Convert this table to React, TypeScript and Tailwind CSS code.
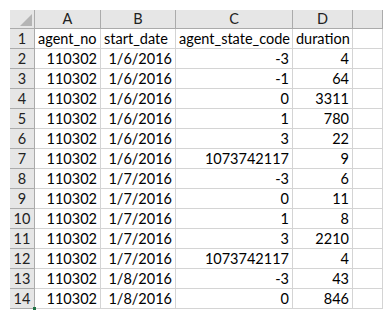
import React from 'react';

const rows: [string, string, string, string][] = [
  ['110302', '1/6/2016', '-3', '4'],
  ['110302', '1/6/2016', '-1', '64'],
  ['110302', '1/6/2016', '0', '3311'],
  ['110302', '1/6/2016', '1', '780'],
  ['110302', '1/6/2016', '3', '22'],
  ['110302', '1/6/2016', '1073742117', '9'],
  ['110302', '1/7/2016', '-3', '6'],
  ['110302', '1/7/2016', '0', '11'],
  ['110302', '1/7/2016', '1', '8'],
  ['110302', '1/7/2016', '3', '2210'],
  ['110302', '1/7/2016', '1073742117', '4'],
  ['110302', '1/8/2016', '-3', '43'],
  ['110302', '1/8/2016', '0', '846'],
];

const cols = ['w-[66px]', 'w-[75px]', 'w-[117px]', 'w-[60px]', 'w-[30px]'];

const Cell = ({ w, children, right }: { w: string; children?: React.ReactNode; right?: boolean }) => (
  <div
    className={`${w} h-full shrink-0 border-r border-b border-[#d4d4d4] px-[3px] flex items-center ${right ? 'justify-end' : 'justify-start'} overflow-hidden whitespace-nowrap`}
  >
    {children}
  </div>
);

const RowHead = ({ n, last }: { n: number; last?: boolean }) => (
  <div className="w-[25px] h-full shrink-0 bg-[#e6e6e6] border-r border-b border-[#ababab] flex items-center justify-center text-[#222] relative">
    {n}
    {last && <div className="absolute -right-[2px] -bottom-[2px] w-[3px] h-[3px] bg-[#217346]" />}
  </div>
);

export default function App() {
  return (
    <div
      className="w-[392px] h-[313px] bg-white pl-[10px] pt-[10px] overflow-hidden text-[14.5px] text-black"
      style={{ fontFamily: 'Lato, "Liberation Sans", sans-serif' }}
    >
      {/* column headers */}
      <div className="flex h-[19px]">
        <div className="w-[25px] h-full shrink-0 bg-[#e6e6e6] border-r border-b border-[#ababab] relative">
          <svg className="absolute right-[2px] bottom-[2px]" width="12" height="12" viewBox="0 0 12 12">
            <polygon points="12,0 12,12 0,12" fill="#b4b4b4" />
          </svg>
        </div>
        {['A', 'B', 'C', 'D', ''].map((c, i) => (
          <div
            key={i}
            className={`${cols[i]} h-full shrink-0 bg-[#e6e6e6] border-r border-b border-[#ababab] flex items-center justify-center text-[#222]`}
          >
            {c}
          </div>
        ))}
      </div>

      {/* header row */}
      <div className="flex h-[20px]">
        <RowHead n={1} />
        <Cell w={cols[0]}>agent_no</Cell>
        <Cell w={cols[1]}>start_date</Cell>
        <Cell w={cols[2]}>agent_state_code</Cell>
        <Cell w={cols[3]}>duration</Cell>
        <Cell w={cols[4]} />
      </div>

      {rows.map((r, i) => (
        <div key={i} className="flex h-[20px]">
          <RowHead n={i + 2} last={i === rows.length - 1} />
          <Cell w={cols[0]} right>{r[0]}</Cell>
          <Cell w={cols[1]} right>{r[1]}</Cell>
          <Cell w={cols[2]} right>{r[2]}</Cell>
          <Cell w={cols[3]} right>{r[3]}</Cell>
          <Cell w={cols[4]} />
        </div>
      ))}
    </div>
  );
}
